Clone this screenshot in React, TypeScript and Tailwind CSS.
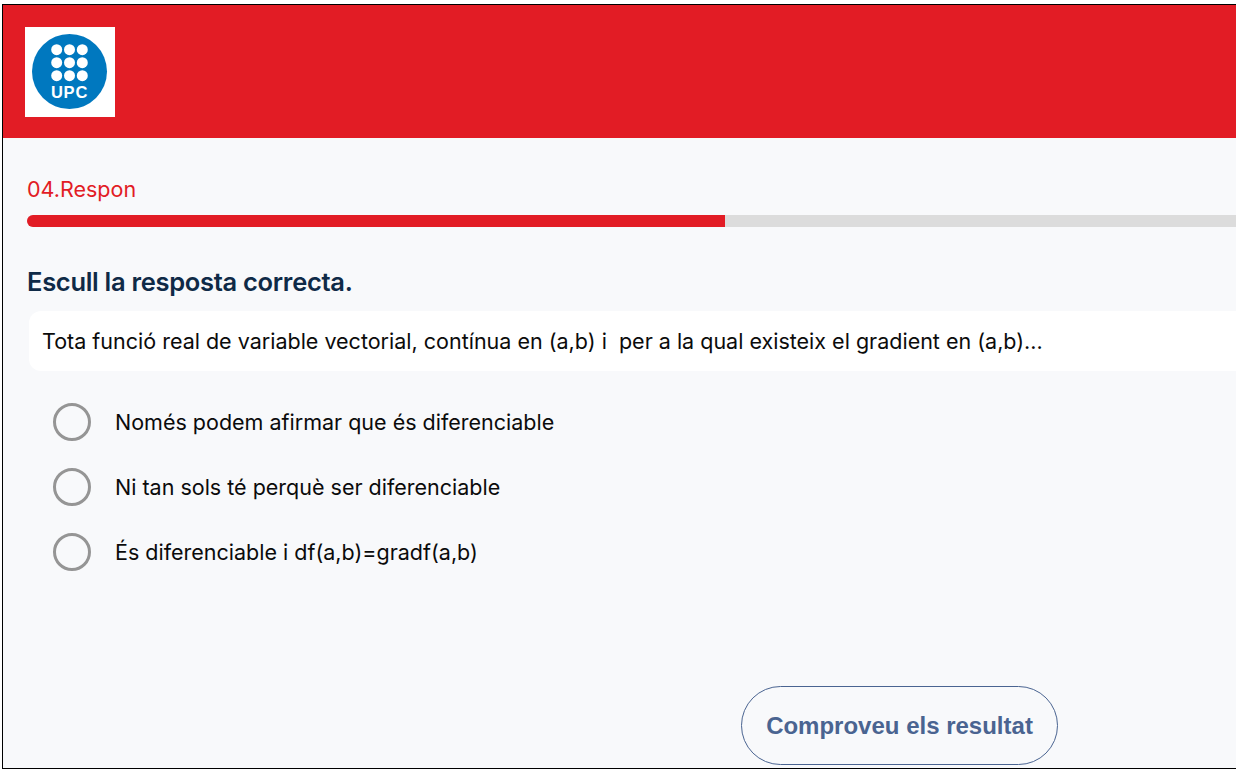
export default function App() {
  const opts = [
    "Només podem afirmar que és diferenciable",
    "Ni tan sols té perquè ser diferenciable",
    "És diferenciable i df(a,b)=gradf(a,b)",
  ];
  return (
    <div className="h-[773px] w-[1236px] overflow-hidden bg-white pt-[4px] pl-[2px] font-['Inter','Noto_Sans',sans-serif]">
      <div className="flex h-[765px] w-[1300px] flex-col border-t border-b border-l border-black bg-[#f8f9fb]">
        <header className="h-[133px] shrink-0 bg-[#e21c25] pt-[22px] pl-[22px]">
          <div className="flex h-[90px] w-[90px] items-center justify-center bg-white">
            <svg width="76" height="76" viewBox="0 0 76 76">
              <circle cx="37.5" cy="37.5" r="37.5" fill="#0078bf" />
              {[15.7, 28.7, 41.7].map((y) =>
                [24.7, 37.5, 50.3].map((x) => <circle key={`${x}-${y}`} cx={x} cy={y} r="5.5" fill="#fff" />),
              )}
              <text x="37.5" y="64" textAnchor="middle" fill="#fff" fontSize="16.5" fontWeight="700" fontFamily="'Liberation Sans',sans-serif" letterSpacing="0.8">UPC</text>
            </svg>
          </div>
        </header>
        <main className="relative flex-1 pl-[24px]">
          <div className="mt-[38px] text-[21.5px] leading-[26px] text-[#e21c25]">04.Respon</div>
          <div className="mt-[13px] h-[12px] w-[1276px] rounded-l-full bg-[#dcdcdc]">
            <div className="h-full w-[698px] rounded-l-full bg-[#e21c25]" />
          </div>
          <h1 className="mt-[39px] text-[25.5px] leading-[32px] font-semibold tracking-[-0.3px] text-[#0f2a47]">Escull la resposta correcta.</h1>
          <div className="mt-[13px] ml-[2px] flex h-[60px] items-center rounded-l-[12px] bg-white pl-[13px] text-[21.5px] whitespace-pre text-[#0b0b0b]">
            Tota funció real de variable vectorial, contínua en (a,b) i  per a la qual existeix el gradient en (a,b)...
          </div>
          <div className="mt-[32px] flex flex-col gap-[27px] pl-[26px]">
            {opts.map((t) => (
              <div key={t} className="flex h-[38px] items-center gap-[24px]">
                <span className="h-[38px] w-[38px] shrink-0 rounded-full border-[3px] border-[#959595]" />
                <span className="text-[21.5px] text-[#0b0b0b]">{t}</span>
              </div>
            ))}
          </div>
          <div className="mt-[115px] ml-[714px]">
            <button className="h-[79px] w-[317px] rounded-full border border-[#4a6491] font-['Liberation_Sans',sans-serif] text-[24px] font-bold text-[#4a6491]">
              Comproveu els resultat
            </button>
          </div>
        </main>
      </div>
    </div>
  );
}
